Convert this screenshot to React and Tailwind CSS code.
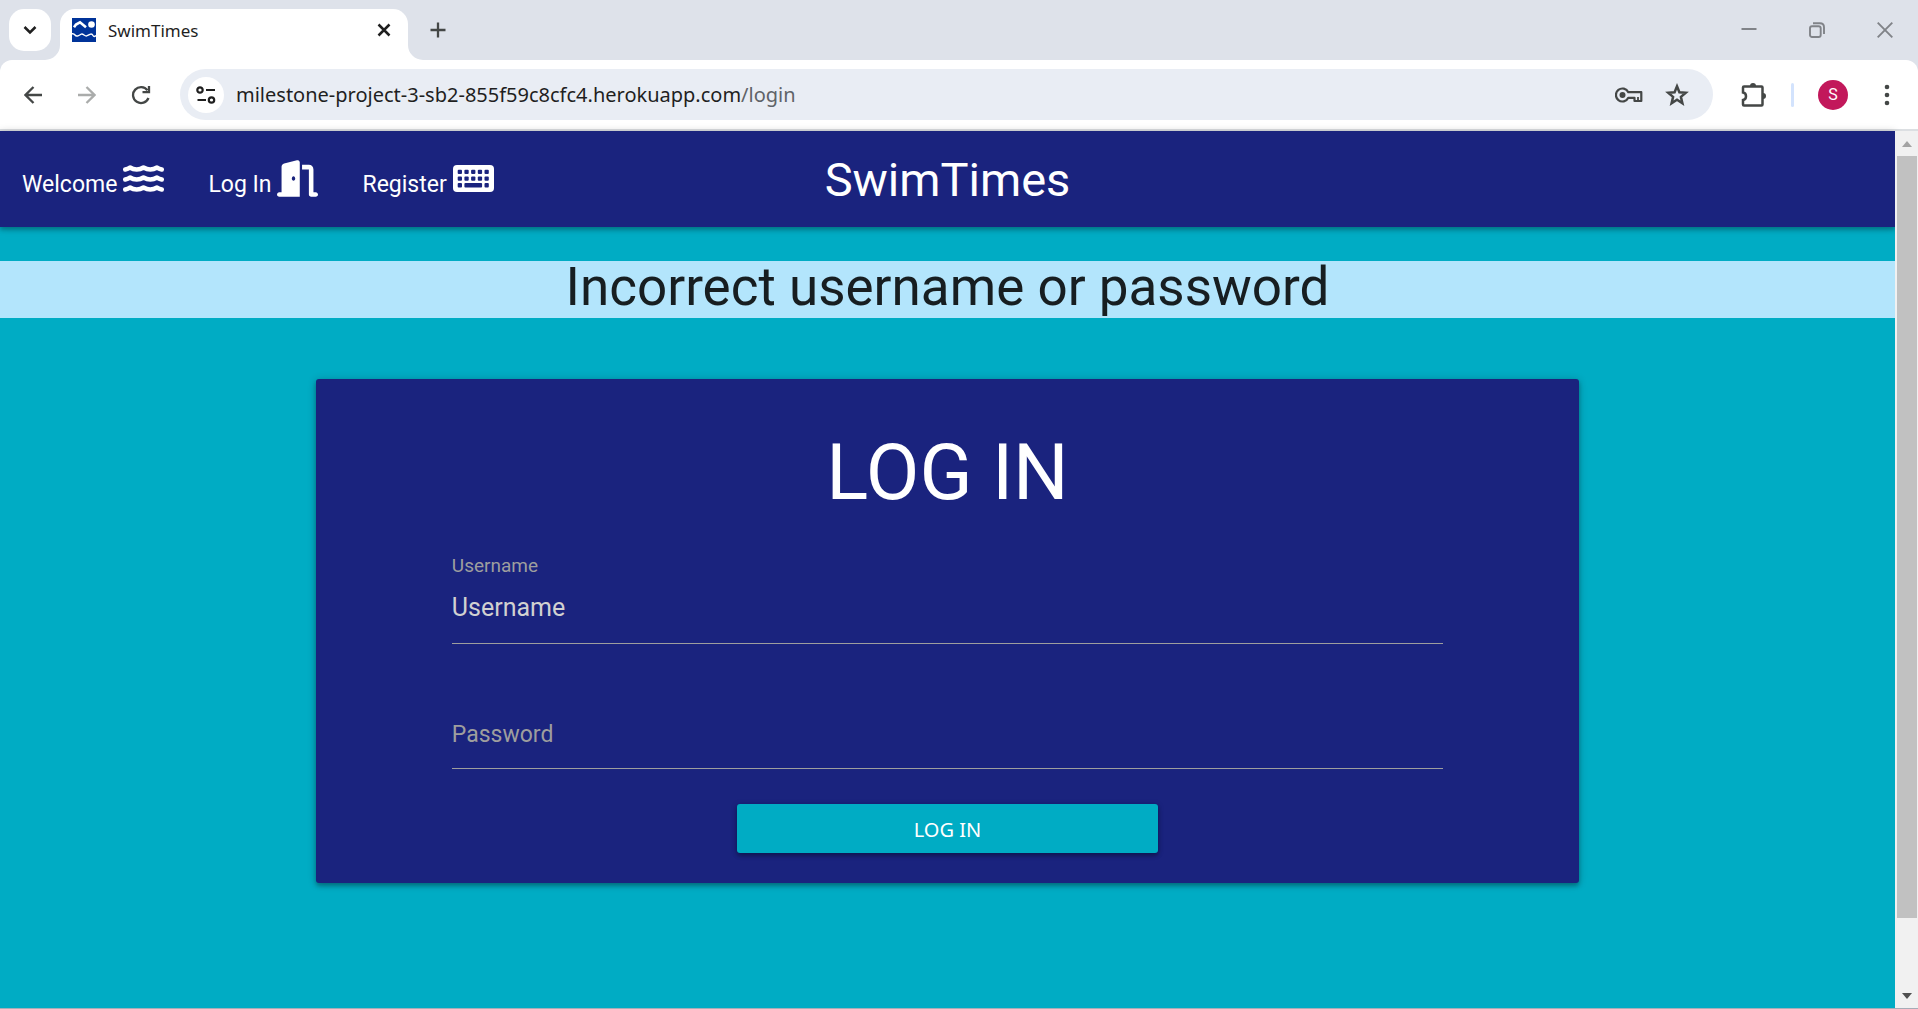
import React from "react";
import { FaDoorOpen } from "react-icons/fa6";

const stroke = { fill: "none", stroke: "currentColor" };

function TabStrip() {
  return (
    <header className="flex h-[60px] shrink-0 items-end bg-[#dee2ea] pl-[9px] text-[#1f1f1f]">
      <button aria-label="Search tabs" className="mb-[9px] flex size-[42px] shrink-0 items-center justify-center rounded-[15px] bg-white">
        <svg width="14" height="10" viewBox="0 0 14 10" strokeWidth="2.5" {...stroke}>
          <path d="M1.5 2 7 7.5 12.5 2" />
        </svg>
      </button>
      <svg width="15" height="15" viewBox="0 0 15 15" className="-ml-[6px] shrink-0" fill="#fff">
        <path d="M15 0V15H0A15 15 0 0 0 15 0Z" />
      </svg>
      <div className="flex h-[51px] w-[348px] shrink-0 items-center rounded-t-[15px] bg-white pr-[17px] pb-[9px] pl-3">
        <svg width="24" height="24" viewBox="0 0 24 24">
          <rect width="24" height="24" fill="#003399" />
          <circle cx="19.5" cy="6.5" r="3.3" fill="#fff" />
          <path d="M2 9.3 4 6.500 8 4.300 14 9.300" fill="none" stroke="#fff" strokeWidth="2.6" />
          <path d="M0 15.800Q2 15.500 3 17T6 17.800 9 16.300 12 17 15 17.800 18 16.300 21 17.500 24 17.500" fill="none" stroke="#fff" strokeWidth="1.4" />
        </svg>
        <span className="ml-3 flex-1 pt-[2px] text-[17px] leading-6">SwimTimes</span>
        <button aria-label="Close tab">
          <svg width="14" height="14" viewBox="0 0 14 14" strokeWidth="2.5" {...stroke}>
            <path d="M1.500 1.500 12.500 12.500M12.500 1.500 1.500 12.500" />
          </svg>
        </button>
      </div>
      <svg width="15" height="15" viewBox="0 0 15 15" className="shrink-0" fill="#fff">
        <path d="M0 0V15H15A15 15 0 0 1 0 0Z" />
      </svg>
      <button aria-label="New tab" className="mb-[22px] ml-[7px] text-[#444746]">
        <svg width="16" height="16" viewBox="0 0 16 16" strokeWidth="2.3" {...stroke}>
          <path d="M8 .5V15.500M.5 8H15.500" />
        </svg>
      </button>
      <div className="mr-[25px] mb-[22px] ml-auto flex items-center gap-[52px] text-[#808388]">
        <button aria-label="Minimize">
          <svg width="16" height="16" viewBox="0 0 16 16" strokeWidth="2" {...stroke}><path d="M.5 7H15.500" /></svg>
        </button>
        <button aria-label="Restore">
          <svg width="16" height="16" viewBox="0 0 16 16" strokeWidth="1.9" {...stroke}>
            <rect x="1" y="4.300" width="10.700" height="10.700" rx="2" />
            <path d="M4 1.200H11Q15 1.200 15 5.200V12" />
          </svg>
        </button>
        <button aria-label="Close window">
          <svg width="16" height="16" viewBox="0 0 16 16" strokeWidth="1.9" {...stroke}><path d="M.7 .7 15.300 15.300M15.300 .7 .7 15.300" /></svg>
        </button>
      </div>
    </header>
  );
}

function Toolbar() {
  return (
    <div className="shrink-0 bg-[#dee2ea]">
      <div className="flex h-[71px] items-center rounded-t-[12px] border-b-2 border-[#dcdfe2] bg-white pr-[28px] pl-6 text-[#444746]">
        <button aria-label="Back">
          <svg width="18" height="18" viewBox="0 0 18 18" strokeWidth="2.300" {...stroke}><path d="M18 9H2M9.500 1 1.500 9 9.500 17" /></svg>
        </button>
        <button aria-label="Forward" className="ml-9 text-[#aaacab]">
          <svg width="18" height="18" viewBox="0 0 18 18" strokeWidth="2.300" {...stroke}><path d="M0 9H16M8.500 1 16.500 9 8.500 17" /></svg>
        </button>
        <button aria-label="Reload" className="ml-[35px]">
          <svg width="20" height="20" viewBox="0 0 20 20" strokeWidth="2.300" {...stroke}>
            <path d="M17.500 13A8 8 0 1 1 16.500 5.300" />
            <path d="M18 1V7.200H11.500" />
          </svg>
        </button>
        <div className="ml-[29px] flex h-[51px] flex-1 items-center rounded-full bg-[#e9edf4] pr-[24px] pl-2">
          <button aria-label="View site information" className="flex size-9 shrink-0 items-center justify-center rounded-full bg-white text-[#1f1f1f]">
            <svg width="20" height="18" viewBox="0 0 20 18" strokeWidth="2.200" {...stroke}>
              <circle cx="4" cy="4" r="2.700" />
              <path d="M10 4H19M1.500 14H10" />
              <circle cx="15.500" cy="14" r="2.700" />
            </svg>
          </button>
          <a href="#login" className="ml-3 flex-1 text-[20px] text-[#1f1f1f]">
            milestone-project-3-sb2-855f59c8cfc4.herokuapp.com<span className="text-[#5f6368]">/login</span>
          </a>
          <button aria-label="Manage passwords">
            <svg width="28" height="16" viewBox="0 0 28 16" strokeWidth="2.200" {...stroke}>
              <path d="M13.300 5.200A6.500 6.500 0 1 0 13.300 10.800H19.500V14H26.300V5.200H13.300Z" strokeLinejoin="round" />
              <circle cx="7.500" cy="8" r="3" fill="currentColor" stroke="none" />
              <path d="M23 10V14" strokeWidth="1.800" />
            </svg>
          </button>
          <button aria-label="Bookmark this tab" className="ml-[22px]">
            <svg width="24" height="24" viewBox="0 0 24 24" strokeWidth="2.500" {...stroke}>
              <path d="M12 3.300 14.400 9.200 20.800 9.700 15.900 13.900 17.400 20.200 12 16.800 6.600 20.200 8.100 13.900 3.200 9.700 9.600 9.200Z" />
            </svg>
          </button>
        </div>
        <button aria-label="Extensions" className="ml-[28px]">
          <svg width="26" height="26" viewBox="0 0 26 26" strokeWidth="2.500" {...stroke}>
            <path d="M3 4.500H20.500Q21.500 4.500 21.500 5.500V22.500Q21.500 23.500 20.500 23.500H3Q2 23.500 2 22.500V18C6 17.500 6 11 2 10.500V5.500Q2 4.500 3 4.500Z" />
            <path d="M9 4A3 3 0 0 1 15 4ZM22 11A3 3 0 0 1 22 17Z" fill="currentColor" stroke="none" />
          </svg>
        </button>
        <span className="ml-6 h-6 w-[3px] rounded-full bg-[#d3e3fd]" />
        <button aria-label="Profile S" className="ml-6 flex size-[30px] items-center justify-center rounded-full bg-[#c2185b] font-[Roboto] text-[16px] text-white">S</button>
        <button aria-label="Menu" className="ml-9">
          <svg width="6" height="24" viewBox="0 0 6 24" fill="currentColor">
            <circle cx="3" cy="4" r="2.300" /><circle cx="3" cy="12" r="2.300" /><circle cx="3" cy="20" r="2.300" />
          </svg>
        </button>
      </div>
    </div>
  );
}

function WaterIcon({ className }) {
  return (
    <svg viewBox="0 0 41 37" className={className} fill="none" stroke="currentColor" strokeWidth="4.600" strokeLinecap="round" strokeLinejoin="round">
      {[5, 15, 25].map((y) => (
        <path key={y} transform={`translate(0 ${y})`} d="M2.300 4.500Q5 4 7 2.500Q10 4.500 13.700 4.500T20.500 2.500Q24 4.500 27.300 4.500T34 2.500Q36 4 38.700 4.500" />
      ))}
    </svg>
  );
}

const KEYS = [[4.7, 4.7], [11.4, 4.7], [18.1, 4.7], [24.8, 4.7], [31.5, 4.7], [4.7, 11.4], [11.4, 11.4], [18.1, 11.4], [24.8, 11.4], [31.5, 11.4], [4.7, 18.1], [31.5, 18.1]];

function KeyboardIcon({ className }) {
  return (
    <svg viewBox="0 0 41 37" className={className} fill="currentColor">
      <rect y="5" width="41" height="27" rx="4" />
      <g fill="#1a237e">
        {KEYS.map(([x, y]) => (
          <rect key={x + "-" + y} x={x} y={y + 5} width="4.300" height="4.300" rx="1" />
        ))}
        <rect x="11.400" y="23.100" width="17.700" height="4.300" rx="1" />
      </g>
    </svg>
  );
}

function NavLink({ label, icon: Icon }) {
  return (
    <a href={"#" + label} className="flex items-center gap-[6px] px-[22px] text-[23px]">
      <span className="pt-[12px]">{label}</span>
      <Icon className="mb-[2px] h-[37px] w-[41px]" />
    </a>
  );
}

function SiteNav() {
  return (
    <nav className="grid h-24 grid-cols-[1fr_auto_1fr] items-center bg-[#1a237e] text-white shadow-[0_3px_4px_rgba(0,0,0,0.2),0_1px_8px_rgba(0,0,0,0.22)]">
      <div className="flex">
        <NavLink label="Welcome" icon={WaterIcon} />
        <NavLink label="Log In" icon={FaDoorOpen} />
        <NavLink label="Register" icon={KeyboardIcon} />
      </div>
      <a href="#home" className="pt-[2px] text-[47px]">SwimTimes</a>
    </nav>
  );
}

function LoginCard() {
  return (
    <form onSubmit={(e) => e.preventDefault()} className="mx-auto mt-[61px] flex w-2/3 flex-col rounded-[3px] bg-[#1a237e] px-[136px] pt-[49px] pb-[30px] shadow-[0_3px_4px_rgba(0,0,0,0.25),0_1px_8px_rgba(0,0,0,0.22)]">
      <h1 className="text-center text-[78px] leading-[90px] text-white">LOG IN</h1>
      <label htmlFor="username" className="mt-9 text-[19px] leading-6 text-[#9e9e9e]">Username</label>
      <input id="username" placeholder="Username" className="h-[66px] w-full border-b border-[#9e9e9e] bg-transparent pb-[6px] text-[25px] text-white outline-none placeholder:text-[#d1d1d1]" />
      <input id="password" type="password" aria-label="Password" placeholder="Password" className="mt-[59px] h-[66px] w-full border-b border-[#9e9e9e] bg-transparent pb-[2px] text-[23px] text-white outline-none placeholder:text-[#9e9e9e]" />
      <button className="mx-auto mt-[35px] h-[49px] w-[421px] rounded-[3px] bg-[#00acc4] pt-[2px] font-[Noto_Sans] text-[20px] text-white shadow-[0_3px_4px_rgba(0,0,0,0.25),0_1px_6px_rgba(0,0,0,0.2)]">LOG IN</button>
    </form>
  );
}

function ScrollBar() {
  return (
    <div className="flex w-[23px] shrink-0 flex-col items-center bg-[#f1f1f1] pt-[10px] pb-[9px]">
      <svg width="10" height="6" viewBox="0 0 10 6" fill="#a3a3a3"><path d="M5 0 10 6H0Z" /></svg>
      <div className="mt-[9px] w-5 flex-[762] bg-[#c1c1c1]" />
      <div className="flex-[75]" />
      <svg width="10" height="6" viewBox="0 0 10 6" fill="#505050"><path d="M0 0H10L5 6Z" /></svg>
    </div>
  );
}

export default function App() {
  return (
    <div className="flex min-h-screen flex-col font-['Noto_Sans',sans-serif]">
      <TabStrip />
      <Toolbar />
      <div className="flex flex-1 border-b border-[#a6adb8]">
        <main className="min-w-0 flex-1 bg-[#00acc4] font-[Roboto,sans-serif]">
          <SiteNav />
          <p role="alert" className="mt-[34px] bg-[#b3e5fc] pb-1 text-center text-[53px] leading-[53px] text-[#171e21]">Incorrect username or password</p>
          <LoginCard />
        </main>
        <ScrollBar />
      </div>
    </div>
  );
}
